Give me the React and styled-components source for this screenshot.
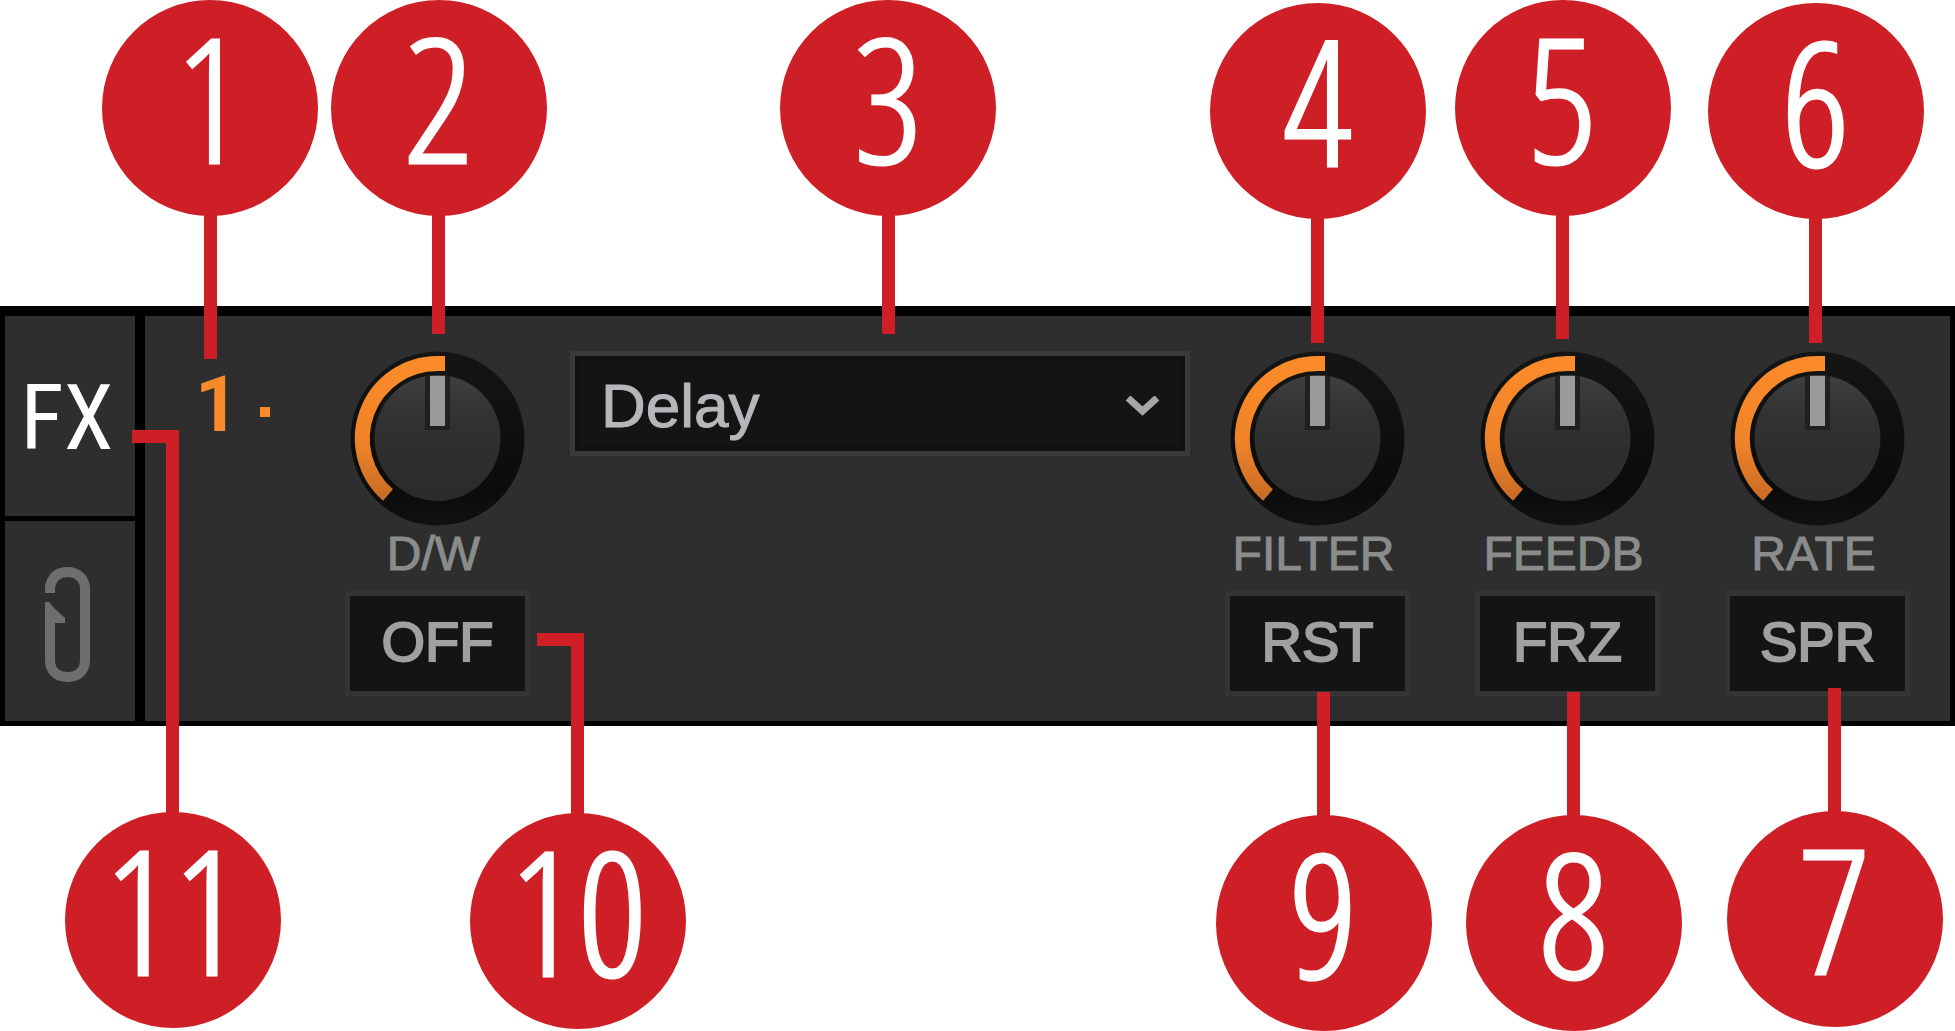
import React from 'react';
import styled, { createGlobalStyle } from 'styled-components';

const red = '#cf1f26';
const orange = '#f88a2a';
const ink = '#131514';
const panel = '#2e2e2e';

const GlobalStyle = createGlobalStyle`
  *, *::before, *::after { box-sizing: border-box; }
  body {
    margin: 0;
    background: #fff;
    font-family: "Liberation Sans", Arial, sans-serif;
    overflow-x: hidden;
  }
`;

const Page = styled.main`
  padding: 306px 0 305px;
`;

const Panel = styled.section`
  display: flex;
  gap: 10px;
  background: #000;
  border: 5px solid #000;
  border-top-width: 10px;
`;

const Tabs = styled.nav`
  display: flex;
  flex-direction: column;
  flex: none;
  gap: 5px;
  width: 130px;
`;

const TabSlot = styled.div`
  position: relative;
  display: flex;
  flex: 1;
`;

const Tab = styled.button`
  display: flex;
  flex: 1;
  align-items: center;
  justify-content: center;
  padding: 6px 6px 0 0;
  border: 0;
  background: ${panel};
  color: #fff;
  font: 400 90px/100px "Roboto Condensed", "Liberation Sans", sans-serif;
`;

const Unit = styled.div`
  display: flex;
  flex: 1;
  align-items: flex-start;
  padding: 35px 40px 25px 50px;
  background: ${panel};
`;

const Slot = styled.div`
  position: relative;
  display: flex;
  flex: none;
  align-items: center;
  gap: 35px;
  width: 150px;
  height: 109px;
  color: ${orange};
  font: 700 77px/109px Roboto, sans-serif;
`;

const SlotNumber = styled.span`
  width: 30px;
  text-align: center;
`;

const SlotDot = styled.span`
  width: 10px;
  height: 10px;
  margin-top: 12px;
  background: ${orange};
`;

const Column = styled.div`
  position: relative;
  display: flex;
  flex: none;
  flex-direction: column;
  align-items: center;
  width: 185px;
`;

const Dial = styled.div`
  position: relative;
  width: 175px;
  height: 175px;

  svg { display: block; }

  input {
    position: absolute;
    inset: 0;
    width: 100%;
    height: 100%;
    margin: 0;
    opacity: 0;
  }
`;

const DialLabel = styled.label`
  margin-bottom: 10px;
  padding-right: 8px;
  color: #8a8c8b;
  font-size: 48px;
  line-height: 55px;
  -webkit-text-stroke: 1px #8a8c8b;
`;

const PadSlot = styled.div`
  position: relative;
  width: 100%;
`;

const Pad = styled.button`
  display: block;
  width: 100%;
  height: 105px;
  padding: 0 0 3px;
  border: 5px solid #343434;
  background: ${ink};
  color: #a0a0a0;
  font: 400 56px/60px "Liberation Sans", Arial, sans-serif;
  -webkit-text-stroke: 2px #a0a0a0;
`;

const EffectSlot = styled.div`
  position: relative;
  flex: 1;
  min-width: 300px;
  margin: 0 35px 0 40px;

  svg {
    position: absolute;
    right: 30px;
    top: 45px;
    pointer-events: none;
  }
`;

const EffectSelect = styled.select`
  display: block;
  width: 100%;
  height: 105px;
  padding: 5px 80px 0 26px;
  border: 5px solid #3a3a3a;
  border-radius: 0;
  outline: 5px solid #101211;
  outline-offset: -10px;
  appearance: none;
  background: ${ink};
  color: #b6b7ba;
  font: 400 62px/90px "Liberation Sans", Arial, sans-serif;
  -webkit-text-stroke: 1px #b6b7ba;
`;

const Parameters = styled.div`
  display: flex;
  flex: none;
  gap: 65px;
`;

const Pin = styled.div`
  position: absolute;
  z-index: 1;
  left: calc(50% + ${p => p.$shift || 0}px);
  ${p => (p.$below ? `top: calc(100% - ${p.$overlap}px);` : `bottom: calc(100% - ${p.$overlap}px);`)}
  display: flex;
  flex-direction: ${p => (p.$below ? 'column-reverse' : 'column')};
  align-items: center;
  transform: translateX(-50%);
  pointer-events: none;
`;

const Stem = styled.span`
  width: 13px;
  height: ${p => p.$length}px;
  margin: ${p => (p.$below ? '0 0 -4px' : '-4px 0 0')};
  background: ${red};
`;

const Badge = styled.span`
  display: flex;
  align-items: center;
  justify-content: center;
  flex: none;
  width: 216px;
  height: 216px;
  padding-bottom: 24px;
  border-radius: 50%;
  background: ${red};
  color: #fff;
  font: 300 172px/160px "Open Sans Condensed Light", "Open Sans Condensed", sans-serif;
  -webkit-text-stroke: 3px #fff;
`;

const ElbowPin = styled.div`
  position: absolute;
  z-index: 1;
  left: calc(100% + ${p => p.$gap}px);
  top: ${p => p.$top}px;
  width: 47px;
  pointer-events: none;

  ${Badge} { margin: -4px 0 0 -67px; }
`;

const Elbow = styled.div`
  height: ${p => p.$length}px;
  border: 0 solid ${red};
  border-width: 13px 13px 0 0;
`;

function Callout({ n, below, shift, overlap, length }) {
  return (
    <Pin $below={below} $shift={shift} $overlap={overlap}>
      <Badge>{n}</Badge>
      <Stem $below={below} $length={length + 4} />
    </Pin>
  );
}

function ElbowCallout({ n, gap, top, length }) {
  return (
    <ElbowPin $gap={gap} $top={top}>
      <Elbow $length={length + 4} />
      <Badge>{n}</Badge>
    </ElbowPin>
  );
}

function Knob({ id }) {
  return (
    <Dial>
      <svg width="175" height="175" viewBox="0 0 175 175" aria-hidden="true">
        <defs>
          <linearGradient id={`${id}-cap`} x1="0" y1="0" x2="0" y2="1">
            <stop offset="0" stopColor="#3f3f3f" />
            <stop offset="0.3" stopColor="#333333" />
            <stop offset="0.6" stopColor="#2e2e2e" />
            <stop offset="1" stopColor="#2a2b2b" />
          </linearGradient>
          <linearGradient id={`${id}-ring`} x1="0" y1="0" x2="0" y2="1">
            <stop offset="0" stopColor="#141615" />
            <stop offset="0.8" stopColor="#0a0c0b" />
            <stop offset="1" stopColor="#101111" />
          </linearGradient>
          <linearGradient id={`${id}-arc`} x1="0" y1="0" x2="0" y2="1">
            <stop offset="0" stopColor="#fb8b2a" />
            <stop offset="0.6" stopColor="#f08328" />
            <stop offset="1" stopColor="#cc6d25" />
          </linearGradient>
        </defs>
        <circle cx="87.5" cy="87.5" r="87" fill={`url(#${id}-ring)`} />
        <circle cx="87.5" cy="87" r="63" fill={`url(#${id}-cap)`} />
        <path
          d="M95 12.5H87.5A75 75 0 0 0 38 144"
          fill="none"
          stroke={`url(#${id}-arc)`}
          strokeWidth="15"
        />
        <rect x="75" y="25" width="25" height="54" fill="#202020" />
        <rect x="80" y="25" width="15" height="50" fill="#9a9a9a" />
      </svg>
      <input id={id} type="range" min="0" max="100" defaultValue="50" />
    </Dial>
  );
}

function Control({ id, label, pad, top, bottom, elbow }) {
  return (
    <Column>
      <Callout {...top} />
      <Knob id={id} />
      <DialLabel htmlFor={id}>{label}</DialLabel>
      <PadSlot>
        <Pad type="button">{pad}</Pad>
        {bottom && <Callout below {...bottom} />}
        {elbow && <ElbowCallout {...elbow} />}
      </PadSlot>
    </Column>
  );
}

const parameters = [
  {
    id: 'filter', label: 'FILTER', pad: 'RST',
    top: { n: 4, shift: 0, overlap: -8, length: 124 },
    bottom: { n: 9, shift: 6, overlap: 4, length: 123 },
  },
  {
    id: 'feedback', label: 'FEEDB', pad: 'FRZ',
    top: { n: 5, shift: -5, overlap: -12, length: 123 },
    bottom: { n: 8, shift: 6, overlap: 4, length: 123 },
  },
  {
    id: 'rate', label: 'RATE', pad: 'SPR',
    top: { n: 6, shift: -2, overlap: -8, length: 124 },
    bottom: { n: 7, shift: 17, overlap: 8, length: 123 },
  },
];

export default function App() {
  return (
    <Page>
      <GlobalStyle />
      <Panel aria-label="FX unit">
        <Tabs>
          <TabSlot>
            <Tab type="button">FX</Tab>
            <ElbowCallout n={11} gap={-3} top={114} length={382} />
          </TabSlot>
          <TabSlot>
            <Tab type="button" aria-label="Attachments">
              <svg width="45" height="115" viewBox="0 0 45 115" fill="none" stroke="#6e6e6e" strokeWidth="10">
                <path d="M5 26V20C7 10 13 5 22.5 5S40 11 40 22V93C40 104 33 110 22.5 110S5 104 5 93V48" />
                <path d="M0 35H4L10 42L20 51V56H0Z" fill="#6e6e6e" stroke="none" />
              </svg>
            </Tab>
          </TabSlot>
        </Tabs>
        <Unit>
          <Slot>
            <Callout n={1} shift={-60} overlap={8} length={143} />
            <SlotNumber>1</SlotNumber>
            <SlotDot />
          </Slot>
          <Control
            id="dry-wet"
            label="D/W"
            pad="OFF"
            top={{ n: 2, shift: 1, overlap: -17, length: 118 }}
            elbow={{ n: 10, gap: 7, top: 42, length: 180 }}
          />
          <EffectSlot>
            <Callout n={3} shift={8} overlap={-17} length={118} />
            <EffectSelect aria-label="Effect" defaultValue="Delay">
              <option>Delay</option>
            </EffectSelect>
            <svg width="35" height="20" viewBox="0 0 35 20" fill="none" stroke="#a6a6a6" strokeWidth="7" aria-hidden="true">
              <path d="M3 2L17.5 15L32 2" />
            </svg>
          </EffectSlot>
          <Parameters>
            {parameters.map(item => <Control key={item.id} {...item} />)}
          </Parameters>
        </Unit>
      </Panel>
    </Page>
  );
}
